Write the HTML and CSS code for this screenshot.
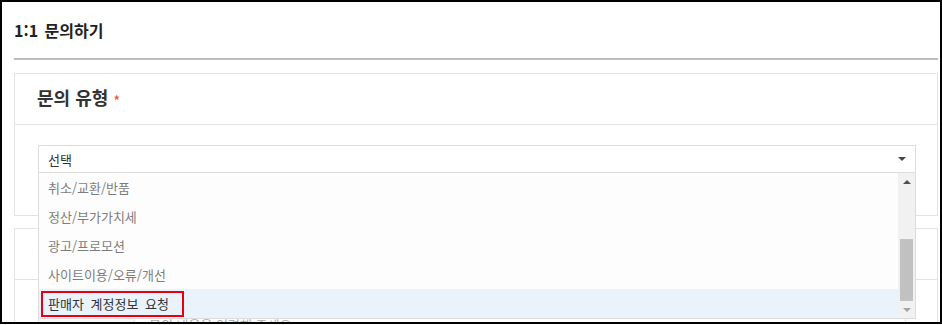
FILE: index.html
```html
<!DOCTYPE html>
<html lang="ko">
<head>
    <meta charset="UTF-8">
    <meta name="viewport" content="width=device-width, initial-scale=1.0">
    <title>1:1 문의하기</title>
    <link rel="stylesheet" href="styles.css">
</head>
<body>
    <div class="frame">
        <h2 class="page-title">1:1 문의하기</h2>

        <section class="card">
            <div class="card-head">
                <h3>문의 유형 <span class="req">*</span></h3>
            </div>
            <div class="card-body">
                <div class="select-wrap">
                    <div class="select">
                        <span>선택</span>
                        <span class="caret"></span>
                    </div>
                    <div class="dropdown">
                        <ul class="options">
                            <li class="option">취소/교환/반품</li>
                            <li class="option">정산/부가가치세</li>
                            <li class="option">광고/프로모션</li>
                            <li class="option">사이트이용/오류/개선</li>
                            <li class="option active">판매자 계정정보 요청<span class="mark"></span></li>
                        </ul>
                        <div class="scrollbar">
                            <div class="sb-btn sb-up"></div>
                            <div class="sb-track"><div class="sb-thumb"></div></div>
                            <div class="sb-btn sb-down"></div>
                        </div>
                    </div>
                </div>
            </div>
        </section>

        <section class="card">
            <div class="card-head">
                <h3><span class="req">*</span> 문의 내용</h3>
            </div>
            <div class="card-body body-wide">
                <div class="row">
                    <div class="row-label"></div>
                    <div class="row-field">문의 내용을 입력해 주세요</div>
                </div>
            </div>
        </section>
    </div>
</body>
</html>
```

FILE: styles.css
```css
body {
    margin: 0;
    background: #fff;
    color: #333;
    font-family: "Noto Sans CJK KR", "Malgun Gothic", sans-serif;
}
.frame {
    width: 942px;
    height: 324px;
    box-sizing: border-box;
    border: 2px solid #000;
    padding: 0 2px 0 12px;
    overflow: hidden;
}
.page-title {
    margin: 0;
    padding: 16px 0;
    font-size: 16px;
    line-height: 24px;
    font-weight: bold;
    word-spacing: 2px;
    color: #222;
    border-bottom: 2px solid #bdbdbd;
}
.card {
    margin-top: 13px;
    border: 1px solid #e3e3e3;
}
.card + .card {
    margin-top: 12px;
}
.card-head {
    padding: 11px 22px 15px;
    border-bottom: 1px solid #e3e3e3;
}
.card-head h3 {
    margin: 0;
    font-size: 18px;
    line-height: 24px;
    font-weight: bold;
    color: #333;
}
.req {
    color: #e5533d;
    font-size: 15px;
    line-height: 1;
    font-weight: normal;
    vertical-align: middle;
}
.card-body {
    padding: 20px 21px 42px 23px;
}
.body-wide {
    padding: 20px 31px 20px 23px;
}

/* select + open list */
.select-wrap {
    position: relative;
}
.select {
    height: 28px;
    box-sizing: border-box;
    border: 1px solid #ddd;
    padding: 0 9px;
    display: flex;
    align-items: center;
    justify-content: space-between;
    font-size: 13px;
    color: #333;
}
.caret {
    width: 0;
    height: 0;
    border-left: 4px solid transparent;
    border-right: 4px solid transparent;
    border-top: 4px solid #444;
}
.dropdown {
    position: absolute;
    top: 100%;
    left: 0;
    right: 0;
    z-index: 2;
    display: flex;
    background: #fdfdfd;
    border: 1px solid #ddd;
    border-top: none;
}
.options {
    flex: 1;
    margin: 0;
    padding: 0;
    list-style: none;
}
.option {
    position: relative;
    height: 29px;
    line-height: 29px;
    padding-left: 9px;
    font-size: 13px;
    word-spacing: 3px;
    color: #7d7d7d;
}
.option.active {
    background: #eaf2fc;
    color: #333;
}
.mark {
    position: absolute;
    left: 2px;
    top: 2px;
    width: 143px;
    height: 26px;
    box-sizing: border-box;
    border: 2px solid #e60012;
}
.scrollbar {
    width: 17px;
    background: #f1f1f1;
    display: flex;
    flex-direction: column;
}
.sb-btn {
    height: 17px;
    display: flex;
    align-items: center;
    justify-content: center;
}
.sb-up::before {
    content: "";
    border-left: 4px solid transparent;
    border-right: 4px solid transparent;
    border-bottom: 4px solid #505050;
}
.sb-down::before {
    content: "";
    border-left: 4px solid transparent;
    border-right: 4px solid transparent;
    border-top: 4px solid #a3a3a3;
}
.sb-track {
    flex: 1;
    display: flex;
    flex-direction: column;
    justify-content: flex-end;
    padding: 0 2px;
}
.sb-thumb {
    height: 62px;
    background: #c1c1c1;
}

/* second card, mostly under the list */
.row {
    display: flex;
    border: 1px solid #e3e3e3;
    height: 100px;
}
.row-label {
    width: 95px;
    background: #f7f7f7;
    border-right: 1px solid #e3e3e3;
}
.row-field {
    flex: 1;
    padding: 15px 14px;
    font-size: 13px;
    line-height: 18px;
    color: #aaa;
}
```
